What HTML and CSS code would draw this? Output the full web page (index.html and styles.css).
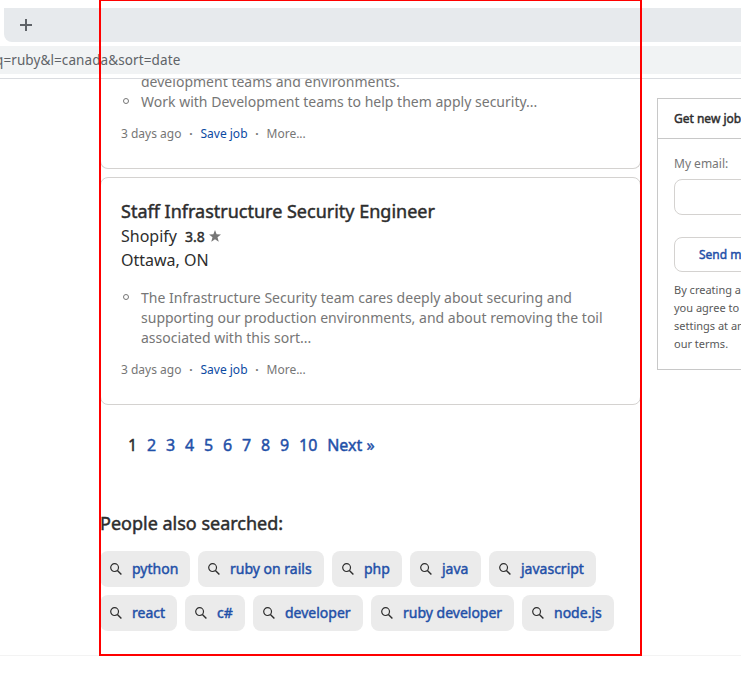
FILE: index.html
```html
<!DOCTYPE html>
<html lang="en">
<head>
<meta charset="utf-8">
<title>Job search</title>
<link rel="stylesheet" href="styles.css">
</head>
<body>
<svg class="defs" width="0" height="0">
  <symbol id="search" viewBox="0 0 12 12"><circle cx="4.6" cy="4.6" r="3.9" fill="none" stroke="#2d2d2d" stroke-width="1.2"/><path d="M7.400 7.400L11.400 11.400" stroke="#2d2d2d" stroke-width="1.4"/></symbol>
</svg>
<header class="browser">
  <div class="tabs">
    <div class="strip"><svg width="12" height="12" viewBox="0 0 12 12"><path d="M6 0V12M0 6H12" stroke="#5f6368" stroke-width="2"/></svg></div>
  </div>
  <div class="address"><span class="url">q=ruby&amp;l=canada&amp;sort=date</span></div>
</header>
<main class="page">
  <section class="results">
    <article class="card card-first">
      <ul class="snippet">
        <li>development teams and environments.</li>
        <li class="dot">Work with Development teams to help them apply security...</li>
      </ul>
      <div class="meta"><span class="age">3 days ago</span><i>·</i><a>Save job</a><i>·</i><span>More...</span></div>
    </article>
    <article class="card card-second">
      <h2>Staff Infrastructure Security Engineer</h2>
      <div class="company"><span>Shopify</span><b>3.8</b><svg width="12" height="12" viewBox="0 0 24 24"><path fill="#767676" d="M12 0l3.200 8.600L24 9l-7 5.600 2.500 9L12 18.500 4.500 23.600 7 14.600 0 9l8.800-.4z"/></svg></div>
      <div class="place">Ottawa, ON</div>
      <ul class="snippet">
        <li class="dot">The Infrastructure Security team cares deeply about securing and<br>supporting our production environments, and about removing the toil<br>associated with this sort...</li>
      </ul>
      <div class="meta"><span class="age">3 days ago</span><i>·</i><a>Save job</a><i>·</i><span>More...</span></div>
    </article>
    <nav class="pages"><b>1</b><a>2</a><a>3</a><a>4</a><a>5</a><a>6</a><a>7</a><a>8</a><a>9</a><a>10</a><a>Next »</a></nav>
    <h3>People also searched:</h3>
    <div class="chips">
      <a class="w90"><svg><use href="#search"/></svg><span>python</span></a>
      <a class="w126"><svg><use href="#search"/></svg><span>ruby on rails</span></a>
      <a class="w70"><svg><use href="#search"/></svg><span>php</span></a>
      <a class="w71"><svg><use href="#search"/></svg><span>java</span></a>
      <a class="w107"><svg><use href="#search"/></svg><span>javascript</span></a>
    </div>
    <div class="chips">
      <a class="w77"><svg><use href="#search"/></svg><span>react</span></a>
      <a class="w60"><svg><use href="#search"/></svg><span>c#</span></a>
      <a class="w110"><svg><use href="#search"/></svg><span>developer</span></a>
      <a class="w143"><svg><use href="#search"/></svg><span>ruby developer</span></a>
      <a class="w92"><svg><use href="#search"/></svg><span>node.js</span></a>
    </div>
  </section>
  <aside class="alert">
    <div class="alert-title">Get new jobs</div>
    <div class="alert-body">
      <label>My email:</label>
      <div class="field"></div>
      <div class="send">Send me</div>
      <p>By creating a job<br>you agree to our<br>settings at any<br>our terms.</p>
    </div>
  </aside>
</main>
<div class="frame"></div>
</body>
</html>
```
FILE: styles.css
```css
* { box-sizing: border-box; }
body { margin: 0; width: 741px; height: 680px; overflow: hidden; background: #fff; color: #2d2d2d; font-family: "Noto Sans", sans-serif; white-space: nowrap; }
h2, h3, p, ul { margin: 0; padding: 0; }
ul { list-style: none; }
i { font-style: normal; }
h2, h3, b, .pages, .chips a, .alert-title, .send { font-weight: 400; -webkit-text-stroke: 0.45px currentColor; }
.defs { display: block; }
.browser { height: 79px; padding-top: 8px; border-bottom: 1px solid #dadce0; }
.tabs { height: 34px; }
.strip { height: 34px; margin-left: 4px; padding: 11px 16px; background: #e7eaed; border-radius: 0 0 0 8px; }
.strip svg { display: block; }
.address { height: 28px; margin-top: 4px; background: #f1f3f4; color: #5f6368; font-size: 13.500px; line-height: 29px; letter-spacing: 0.1px; overflow: hidden; }
.url { display: block; margin-left: -5px; }
.page { display: flex; height: 577px; border-bottom: 1px solid #f3f3f3; }
.results { width: 541px; flex: none; margin-left: 100px; }
.card { border: 1px solid #d4d2d0; border-radius: 8px; padding-left: 20px; }
.card-first { height: 90px; border-top: 0; border-radius: 0 0 8px 8px; overflow: hidden; }
.card-first .snippet { margin-top: -7px; }
.snippet { padding-left: 20px; color: #767676; font-size: 14px; line-height: 20px; letter-spacing: 0.01px; }
.dot { position: relative; }
.dot::before { content: ""; position: absolute; left: -18px; top: 6px; width: 7px; height: 7px; box-sizing: border-box; border: 1px solid #767676; border-radius: 50%; }
.meta { display: flex; margin-top: 13px; color: #767676; font-size: 12px; line-height: 18px; }
.meta a { color: #0b4aa2; }
.meta i { width: 19px; text-align: center; font-weight: 700; }
.card-second { height: 228px; margin-top: 8px; padding-top: 20px; }
h2 { font-size: 18px; line-height: 26px; }
.company { display: flex; align-items: center; height: 24px; font-size: 16px; }
.company b { margin-left: 8px; font-size: 14px; }
.company svg { margin-left: 4px; }
.place { font-size: 16px; line-height: 24px; }
.card-second .snippet { margin-top: 16px; }
.pages { display: flex; height: 24px; margin: 28px 0 0 28px; gap: 9.850px; font-size: 16px; line-height: 24px; color: #1f50a8; }
.pages b { color: #2d2d2d; }
h3 { margin-top: 53px; font-size: 18px; line-height: 26px; }
.chips { display: flex; gap: 8px; margin-top: 15px; }
.chips + .chips { margin-top: 8px; }
.chips a { display: flex; height: 36px; align-items: center; padding-left: 10px; border-radius: 8px; background: #ebebeb; color: #1f50a8; font-size: 14px; }
.chips span { margin-top: -1px; }
.chips svg { width: 12px; height: 12px; margin-right: 10px; }
.w90 { width: 90px; } .w126 { width: 126px; } .w70 { width: 70px; } .w71 { width: 71px; } .w107 { width: 107px; }
.w77 { width: 77px; } .w60 { width: 60px; } .w110 { width: 110px; } .w143 { width: 143px; } .w92 { width: 92px; }
.alert { width: 120px; flex: none; height: 272px; margin: 19px 0 0 16px; border: 1px solid #c8c8c8; }
.alert-title { height: 40px; padding-left: 16px; border-bottom: 1px solid #c8c8c8; font-size: 12px; line-height: 40px; }
.alert-body { padding: 16px 0 0 16px; }
.alert label { display: block; color: #767676; font-size: 12px; line-height: 18px; }
.field { height: 36px; margin-top: 6px; border: 1px solid #d4d2d0; border-radius: 8px; }
.send { height: 35px; margin-top: 22px; padding-left: 24px; border: 1px solid #d4d2d0; border-radius: 8px; color: #1f50a8; font-size: 12px; line-height: 33px; }
.alert p { margin-top: 9px; color: #595959; font-size: 11px; line-height: 18px; }
.dot::before { width: 6px; height: 6px; }
.frame { position: absolute; left: 99px; top: 0; width: 543px; height: 656px; border: 2px solid #f00; border-top-width: 1px; }
```
